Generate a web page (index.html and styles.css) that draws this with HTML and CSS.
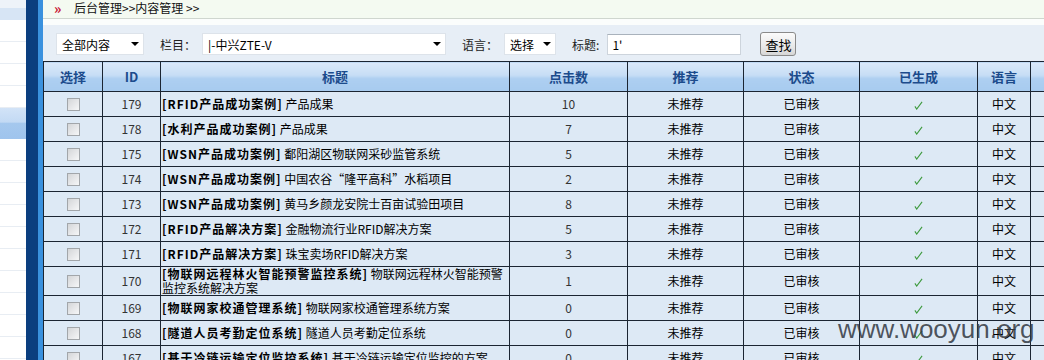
FILE: index.html
```html
<!DOCTYPE HTML>
<html>

<head>
    <meta charset="utf-8">
    <title>内容管理</title>
    <link rel="stylesheet" href="styles.css">
</head>

<body>
    <div class="frame">
        <!-- left menu, mostly scrolled out of view -->
        <div class="menu">
            <div class="menu-item first"></div>
            <div class="menu-item light"></div>
            <div class="menu-item"></div>
            <div class="menu-item"></div>
            <div class="menu-item"></div>
            <div class="menu-item"></div>
            <div class="menu-item active"></div>
            <div class="menu-item"></div>
            <div class="menu-item"></div>
            <div class="menu-item"></div>
            <div class="menu-item"></div>
            <div class="menu-item"></div>
            <div class="menu-item"></div>
            <div class="menu-item"></div>
            <div class="menu-item"></div>
            <div class="menu-item"></div>
            <div class="menu-item"></div>
        </div>
        <div class="split-dark"></div>
        <div class="split-light"></div>

        <div class="main">
            <div class="crumb"><span class="crumb-arrow">&raquo;</span>后台管理&gt;&gt;内容管理 &gt;&gt;</div>

            <div class="search">
                <span class="select-box w-type">
                    <select class="select">
                        <option>全部内容</option>
                    </select>
                </span>
                <span class="field-label">栏目：</span>
                <span class="select-box w-column">
                    <select class="select">
                        <option>|-中兴ZTE-V</option>
                    </select>
                </span>
                <span class="field-label">语言：</span>
                <span class="select-box w-lang">
                    <select class="select">
                        <option>选择</option>
                    </select>
                </span>
                <span class="field-label short">标题:</span>
                <input type="text" class="keyword" value="1'">
                <button class="button">查找</button>
            </div>

            <table class="list">
                <colgroup>
                    <col class="c-sel">
                    <col class="c-id">
                    <col class="c-title">
                    <col class="c-hits">
                    <col class="c-rec">
                    <col class="c-state">
                    <col class="c-gen">
                    <col class="c-lang">
                    <col class="c-more">
                </colgroup>
                <tr>
                    <th>选择</th>
                    <th>ID</th>
                    <th>标题</th>
                    <th>点击数</th>
                    <th>推荐</th>
                    <th>状态</th>
                    <th>已生成</th>
                    <th>语言</th>
                    <th></th>
                </tr>
                <tr>
                    <td><input type="checkbox" class="check"></td>
                    <td class="num">179</td>
                    <td class="title"><b>[RFID产品成功案例]</b> 产品成果</td>
                    <td class="num">10</td>
                    <td>未推荐</td>
                    <td>已审核</td>
                    <td><svg class="tick" viewBox="0 0 10 10"><path d="M1 6 L3 9 L9 1"/></svg></td>
                    <td>中文</td>
                    <td></td>
                </tr>
                <tr>
                    <td><input type="checkbox" class="check"></td>
                    <td class="num">178</td>
                    <td class="title"><b>[水利产品成功案例]</b> 产品成果</td>
                    <td class="num">7</td>
                    <td>未推荐</td>
                    <td>已审核</td>
                    <td><svg class="tick" viewBox="0 0 10 10"><path d="M1 6 L3 9 L9 1"/></svg></td>
                    <td>中文</td>
                    <td></td>
                </tr>
                <tr>
                    <td><input type="checkbox" class="check"></td>
                    <td class="num">175</td>
                    <td class="title"><b>[WSN产品成功案例]</b> 鄱阳湖区物联网采砂监管系统</td>
                    <td class="num">5</td>
                    <td>未推荐</td>
                    <td>已审核</td>
                    <td><svg class="tick" viewBox="0 0 10 10"><path d="M1 6 L3 9 L9 1"/></svg></td>
                    <td>中文</td>
                    <td></td>
                </tr>
                <tr>
                    <td><input type="checkbox" class="check"></td>
                    <td class="num">174</td>
                    <td class="title"><b>[WSN产品成功案例]</b> 中国农谷“隆平高科”水稻项目</td>
                    <td class="num">2</td>
                    <td>未推荐</td>
                    <td>已审核</td>
                    <td><svg class="tick" viewBox="0 0 10 10"><path d="M1 6 L3 9 L9 1"/></svg></td>
                    <td>中文</td>
                    <td></td>
                </tr>
                <tr>
                    <td><input type="checkbox" class="check"></td>
                    <td class="num">173</td>
                    <td class="title"><b>[WSN产品成功案例]</b> 黄马乡颜龙安院士百亩试验田项目</td>
                    <td class="num">8</td>
                    <td>未推荐</td>
                    <td>已审核</td>
                    <td><svg class="tick" viewBox="0 0 10 10"><path d="M1 6 L3 9 L9 1"/></svg></td>
                    <td>中文</td>
                    <td></td>
                </tr>
                <tr>
                    <td><input type="checkbox" class="check"></td>
                    <td class="num">172</td>
                    <td class="title"><b>[RFID产品解决方案]</b> 金融物流行业RFID解决方案</td>
                    <td class="num">5</td>
                    <td>未推荐</td>
                    <td>已审核</td>
                    <td><svg class="tick" viewBox="0 0 10 10"><path d="M1 6 L3 9 L9 1"/></svg></td>
                    <td>中文</td>
                    <td></td>
                </tr>
                <tr>
                    <td><input type="checkbox" class="check"></td>
                    <td class="num">171</td>
                    <td class="title"><b>[RFID产品解决方案]</b> 珠宝卖场RFID解决方案</td>
                    <td class="num">3</td>
                    <td>未推荐</td>
                    <td>已审核</td>
                    <td><svg class="tick" viewBox="0 0 10 10"><path d="M1 6 L3 9 L9 1"/></svg></td>
                    <td>中文</td>
                    <td></td>
                </tr>
                <tr>
                    <td><input type="checkbox" class="check"></td>
                    <td class="num">170</td>
                    <td class="title"><b>[物联网远程林火智能预警监控系统]</b> 物联网远程林火智能预警监控系统解决方案</td>
                    <td class="num">1</td>
                    <td>未推荐</td>
                    <td>已审核</td>
                    <td><svg class="tick" viewBox="0 0 10 10"><path d="M1 6 L3 9 L9 1"/></svg></td>
                    <td>中文</td>
                    <td></td>
                </tr>
                <tr>
                    <td><input type="checkbox" class="check"></td>
                    <td class="num">169</td>
                    <td class="title"><b>[物联网家校通管理系统]</b> 物联网家校通管理系统方案</td>
                    <td class="num">0</td>
                    <td>未推荐</td>
                    <td>已审核</td>
                    <td><svg class="tick" viewBox="0 0 10 10"><path d="M1 6 L3 9 L9 1"/></svg></td>
                    <td>中文</td>
                    <td></td>
                </tr>
                <tr>
                    <td><input type="checkbox" class="check"></td>
                    <td class="num">168</td>
                    <td class="title"><b>[隧道人员考勤定位系统]</b> 隧道人员考勤定位系统</td>
                    <td class="num">0</td>
                    <td>未推荐</td>
                    <td>已审核</td>
                    <td><svg class="tick" viewBox="0 0 10 10"><path d="M1 6 L3 9 L9 1"/></svg></td>
                    <td>中文</td>
                    <td></td>
                </tr>
                <tr>
                    <td><input type="checkbox" class="check"></td>
                    <td class="num">167</td>
                    <td class="title"><b>[基于冷链运输定位监控系统]</b> 基于冷链运输定位监控的方案</td>
                    <td class="num">0</td>
                    <td>未推荐</td>
                    <td>已审核</td>
                    <td><svg class="tick" viewBox="0 0 10 10"><path d="M1 6 L3 9 L9 1"/></svg></td>
                    <td>中文</td>
                    <td></td>
                </tr>
            </table>

            <div class="watermark">www.wooyun.org</div>
        </div>
    </div>
</body>

</html>
```

FILE: styles.css
```css
body {
    margin: 0px;
    font-family: "Noto Sans CJK SC", sans-serif;
    font-size: 12px;
    color: #000;
    background: #fff;
}

.frame {
    display: flex;
    height: 360px;
    overflow: hidden;
}

/* left menu strip */
.menu {
    flex: none;
    width: 26px;
    background: #fff;
}

.menu-item {
    height: 21px;
    border-bottom: 1px solid #e8edf3;
}

.menu-item.first {
    height: 8px;
    background: #eef3f9;
    border-bottom: none;
}

.menu-item.light {
    height: 12px;
    background: #d7e5f5;
    border-bottom: none;
}

.menu-item.active {
    height: 31px;
    background: linear-gradient(#d2e3f7, #c3daf4 45%, #a5c8ee 50%, #9fc4ed);
    border-bottom: none;
}

.split-dark {
    flex: none;
    width: 12px;
    background: #0b3e7f;
}

.split-light {
    flex: none;
    width: 5px;
    background: #3a91de;
}

.main {
    flex: 1;
    min-width: 0;
    overflow: hidden;
    position: relative;
    background: #fbfdfc;
}

/* breadcrumb */
.crumb {
    height: 18px;
    line-height: 16px;
    padding-left: 11px;
    background: #f4faf1;
    border-bottom: 1px solid #cfd6cf;
    color: #111;
}

.crumb-arrow {
    display: inline-block;
    width: 20px;
    line-height: 16px;
    vertical-align: top;
    color: #c8102e;
    font-size: 14px;
    font-weight: bold;
}

/* search bar */
.search {
    display: flex;
    align-items: center;
    height: 36px;
    margin-top: 6px;
    padding-left: 13px;
    padding-top: 2px;
    box-sizing: border-box;
    background: #e7eef6;
    color: #222;
}

.select-box {
    position: relative;
    display: inline-block;
    height: 22px;
}

.select-box::after {
    content: "";
    position: absolute;
    right: 5px;
    top: 9px;
    border-left: 4px solid transparent;
    border-right: 4px solid transparent;
    border-top: 4px solid #000;
    pointer-events: none;
}

.select {
    -webkit-appearance: none;
    appearance: none;
    width: 100%;
    height: 22px;
    margin: 0px;
    padding: 0px 0px 0px 5px;
    border: 1px solid #dde3ea;
    background: #fff;
    font-family: "Noto Sans CJK SC", sans-serif;
    font-size: 12px;
    color: #000;
}

.w-type {
    width: 88px;
}

.w-column {
    width: 244px;
}

.w-lang {
    width: 52px;
}

.field-label {
    margin: 0px 6px 0px 16px;
}

.field-label.short {
    margin-right: 8px;
}

.keyword {
    width: 134px;
    height: 21px;
    margin: 0px;
    padding: 0px 4px;
    box-sizing: border-box;
    border: 1px solid #cdd4dc;
    border-top-color: #a9b2bc;
    background: #fff;
    font-family: "Noto Sans CJK SC", sans-serif;
    font-size: 12px;
}

.button {
    height: 24px;
    margin-left: 19px;
    padding: 0px 4px;
    border: 1px solid #8a8a8a;
    border-radius: 3px;
    background: linear-gradient(#fbfbfb, #e9e9e9 60%, #d6d6d6);
    font-family: "Noto Sans CJK SC", sans-serif;
    font-size: 13px;
    color: #000;
}

/* content list */
.list {
    border-collapse: collapse;
    table-layout: fixed;
    width: 1047px;
    border-top: 1px solid #1b2532;
}

.c-sel { width: 59px; }
.c-id { width: 58px; }
.c-title { width: 349px; }
.c-hits { width: 118px; }
.c-rec { width: 116px; }
.c-state { width: 116px; }
.c-gen { width: 118px; }
.c-lang { width: 53px; }
.c-more { width: 60px; }

.list th,
.list td {
    border: 1px solid #1b2532;
    padding: 0px;
    text-align: center;
    vertical-align: middle;
}

.list th {
    height: 29px;
    background: linear-gradient(#dbe9f9, #c6ddf5 45%, #aecff1 55%, #a7cbef);
    color: #1c4b8c;
    font-size: 13px;
    font-weight: bold;
}

.list td {
    height: 24px;
    line-height: 14px;
    background: #dde9f5;
}

.list td.num {
    color: #333;
}

.list td.title {
    text-align: left;
    padding-left: 1px;
}

.list td.title b {
    letter-spacing: 1px;
}

.check {
    -webkit-appearance: none;
    appearance: none;
    display: block;
    width: 13px;
    height: 13px;
    margin: 0px auto;
    border: 1px solid #a2a6aa;
    background: linear-gradient(135deg, #d4d6d8, #f6f7f8);
}

.tick {
    width: 9px;
    height: 9px;
    vertical-align: middle;
}

.tick path {
    fill: none;
    stroke: #3d9a3d;
    stroke-width: 1.2;
}

.watermark {
    position: absolute;
    left: 795px;
    top: 314px;
    font-family: "Liberation Sans", Arial, sans-serif;
    font-size: 26px;
    color: rgba(50, 56, 66, 0.85);
    pointer-events: none;
}
```
